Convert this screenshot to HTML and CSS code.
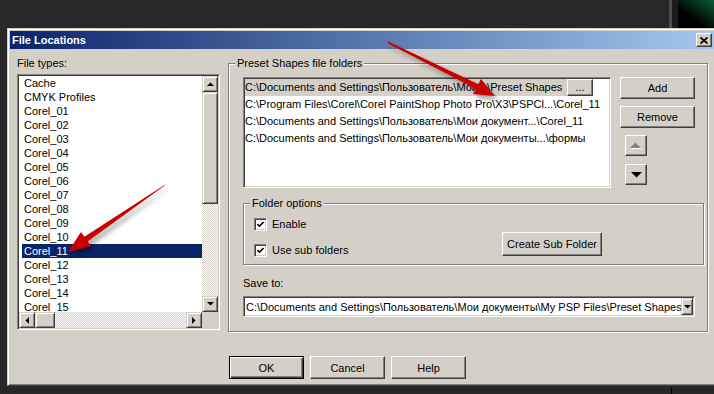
FILE: index.html
```html
<!DOCTYPE html>
<html lang="ru">
<head>
    <meta charset="UTF-8">
    <title>File Locations</title>
    <link rel="stylesheet" href="styles.css">
</head>
<body>
    <div class="dialog">
        <div class="titlebar">
            <span class="title">File Locations</span>
            <button class="close-btn">
                <svg width="8" height="7" viewBox="0 0 8 7"><path d="M0.5 0.5L7.5 6.5M7.5 0.5L0.5 6.5" stroke="#000" stroke-width="1.8"/></svg>
            </button>
        </div>

        <div class="main">
            <div class="types">
                <div class="label">File types:</div>
                <div class="listbox">
                    <div class="list-area">
                        <ul class="items">
                            <li>Cache</li>
                            <li>CMYK Profiles</li>
                            <li>Corel_01</li>
                            <li>Corel_02</li>
                            <li>Corel_03</li>
                            <li>Corel_04</li>
                            <li>Corel_05</li>
                            <li>Corel_06</li>
                            <li>Corel_07</li>
                            <li>Corel_08</li>
                            <li>Corel_09</li>
                            <li>Corel_10</li>
                            <li class="selected">Corel_11</li>
                            <li>Corel_12</li>
                            <li>Corel_13</li>
                            <li>Corel_14</li>
                            <li>Corel_15</li>
                        </ul>
                        <div class="vscroll">
                            <div class="sb-btn"><svg width="7" height="4"><polygon points="0,4 7,4 3.5,0.5" fill="#000"/></svg></div>
                            <div class="sb-thumb vthumb"></div>
                            <div class="sb-track"></div>
                            <div class="sb-btn"><svg width="7" height="4"><polygon points="0,0 7,0 3.5,3.5" fill="#000"/></svg></div>
                        </div>
                    </div>
                    <div class="hscroll-row">
                        <div class="hscroll">
                            <div class="sb-btn"><svg width="4" height="7"><polygon points="4,0 4,7 0.5,3.5" fill="#000"/></svg></div>
                            <div class="sb-thumb hthumb"></div>
                            <div class="sb-track"></div>
                            <div class="sb-btn"><svg width="4" height="7"><polygon points="0,0 0,7 3.5,3.5" fill="#000"/></svg></div>
                        </div>
                        <div class="sb-corner"></div>
                    </div>
                </div>
            </div>

            <div class="group folders-group">
                <div class="legend">Preset Shapes file folders</div>
                <div class="folders-row">
                    <div class="folder-list">
                        <div class="folder editing">
                            <span class="path">C:\Documents and Settings\Пользователь\Мои...\Preset Shapes</span>
                            <button class="btn browse-btn">...</button>
                        </div>
                        <div class="folder">C:\Program Files\Corel\Corel PaintShop Photo Pro\X3\PSPCl...\Corel_11</div>
                        <div class="folder">C:\Documents and Settings\Пользователь\Мои документ...\Corel_11</div>
                        <div class="folder">C:\Documents and Settings\Пользователь\Мои документы...\формы</div>
                    </div>
                    <div class="side-buttons">
                        <button class="btn">Add</button>
                        <button class="btn">Remove</button>
                        <button class="btn arrow-btn" disabled>
                            <svg width="12" height="7"><polygon points="1,7 12,7 6.5,1.5" fill="#fff"/><polygon points="0,6 11,6 5.5,0.5" fill="#808080"/></svg>
                        </button>
                        <button class="btn arrow-btn">
                            <svg width="11" height="6"><polygon points="0,0 11,0 5.5,5.5" fill="#000"/></svg>
                        </button>
                    </div>
                </div>

                <div class="group options-group">
                    <div class="legend">Folder options</div>
                    <div class="options-row">
                        <div class="checks">
                            <label class="check"><span class="box"><svg width="7" height="7"><polyline points="0.5,3 2.5,5.2 6.5,1" fill="none" stroke="#000" stroke-width="1.6"/></svg></span>Enable</label>
                            <label class="check"><span class="box"><svg width="7" height="7"><polyline points="0.5,3 2.5,5.2 6.5,1" fill="none" stroke="#000" stroke-width="1.6"/></svg></span>Use sub folders</label>
                        </div>
                        <button class="btn create-btn">Create Sub Folder</button>
                    </div>
                </div>

                <div class="label save-label">Save to:</div>
                <div class="combo">
                    <span class="combo-text">C:\Documents and Settings\Пользователь\Мои документы\My PSP Files\Preset Shapes</span>
                    <span class="combo-btn"><svg width="7" height="4"><polygon points="0,0 7,0 3.5,3.5" fill="#000"/></svg></span>
                </div>
            </div>
        </div>

        <div class="footer">
            <button class="btn default">OK</button>
            <button class="btn">Cancel</button>
            <button class="btn">Help</button>
        </div>
    </div>

    <!-- red pointer arrows drawn over the screenshot -->
    <svg class="annotations" width="714" height="394">
        <defs>
            <filter id="shadow" x="-20%" y="-20%" width="140%" height="140%">
                <feDropShadow dx="3" dy="4" stdDeviation="2.5" flood-color="#000" flood-opacity="0.35"/>
            </filter>
        </defs>
        <g filter="url(#shadow)" fill="#c80000">
            <polygon points="387,41 389,44 478,90 480,85"/>
            <polygon points="495,96 473,94 481,79"/>
            <polygon points="166,184 164,186 87,242 84,237"/>
            <polygon points="68,252 81,232 91,246"/>
        </g>
    </svg>
</body>
</html>
```

FILE: styles.css
```css
body {
    margin: 0;
    width: 714px;
    height: 394px;
    overflow: hidden;
    position: relative;
    font-family: 'Liberation Sans', Arial, sans-serif;
    font-size: 11px;
    color: #000;
    background:
        linear-gradient(35deg, #000 35%, #0d5b30 100%) 678px 0 / 36px 28px no-repeat,
        linear-gradient(#4e4e4e, #4e4e4e) 669px 0 / 3px 28px no-repeat,
        linear-gradient(#1c1c1c, #1c1c1c) 672px 0 / 6px 28px no-repeat,
        linear-gradient(#000, #000) 671px 387px / 1px 8px no-repeat,
        #282828;
}
.dialog {
    margin: 28px 0 0 7px;
    width: 720px;
    height: 358px;
    box-sizing: border-box;
    padding: 2px;
    background-color: #d4d0c8;
    border: 1px solid;
    border-color: #d4d0c8 #404040 #404040 #d4d0c8;
    box-shadow: inset 1px 1px #fff, inset -1px -1px #808080;
}
.titlebar {
    height: 18px;
    display: flex;
    align-items: center;
    padding-left: 2px;
    background: linear-gradient(to right, #0a246a, #a6caf0);
}
.title {
    color: #fff;
    font-weight: bold;
    font-size: 11px;
}
.close-btn {
    margin-left: auto;
    margin-right: 12px;
    width: 16px;
    height: 14px;
    padding: 0;
    display: flex;
    align-items: center;
    justify-content: center;
    background-color: #d4d0c8;
    border: 1px solid;
    border-color: #fff #404040 #404040 #fff;
    box-shadow: inset -1px -1px #808080;
}
.main {
    display: flex;
    gap: 8px;
    padding: 8px 0 0 7px;
}
.label {
    height: 13px;
    line-height: 13px;
}
.types {
    width: 203px;
}
.listbox, .folder-list, .combo {
    box-sizing: border-box;
    padding: 1px;
    background-color: #fff;
    border: 1px solid;
    border-color: #808080 #fff #fff #808080;
    box-shadow: inset 1px 1px #404040, inset -1px -1px #d4d0c8;
}
.listbox {
    margin-top: 4px;
    height: 256px;
    display: flex;
    flex-direction: column;
}
.list-area {
    display: flex;
    height: 236px;
}
.items {
    flex: 1;
    margin: 0;
    padding: 0;
    list-style: none;
    overflow: hidden;
}
.items li {
    height: 14px;
    line-height: 14px;
    margin-left: 3px;
    padding-left: 2px;
}
.items li.selected {
    background-color: #0a246a;
    color: #fff;
}
.vscroll, .hscroll {
    display: flex;
    background: repeating-conic-gradient(#fff 0 25%, #d4d0c8 0 50%) 0 0 / 2px 2px;
}
.vscroll {
    width: 16px;
    flex-direction: column;
}
.hscroll-row {
    display: flex;
    height: 16px;
}
.hscroll {
    flex: 1;
}
.sb-btn, .sb-thumb {
    flex: none;
    box-sizing: border-box;
    background-color: #d4d0c8;
    border: 1px solid;
    border-color: #d4d0c8 #404040 #404040 #d4d0c8;
    box-shadow: inset 1px 1px #fff, inset -1px -1px #808080;
}
.sb-btn {
    width: 16px;
    height: 16px;
    display: flex;
    align-items: center;
    justify-content: center;
}
.vthumb {
    height: 112px;
}
.hthumb {
    width: 20px;
}
.sb-track {
    flex: 1;
}
.sb-corner {
    width: 16px;
    background-color: #d4d0c8;
}
.group {
    box-sizing: border-box;
    border: 1px solid #808080;
    box-shadow: inset 1px 1px #fff, 1px 1px #fff;
}
.legend {
    display: table;
    height: 13px;
    line-height: 13px;
    padding: 0 2px;
    background-color: #d4d0c8;
}
.folders-group {
    width: 480px;
    height: 269px;
    margin-top: 6px;
    padding-left: 14px;
}
.folders-group > .legend {
    margin: -7px 0 0 -8px;
}
.folders-row {
    display: flex;
    gap: 9px;
    margin-top: 7px;
}
.folder-list {
    width: 368px;
    height: 111px;
}
.folder {
    height: 17px;
    line-height: 17px;
    white-space: nowrap;
    overflow: hidden;
}
.folder.editing {
    display: flex;
}
.folder .path {
    width: 322px;
    overflow: hidden;
    background-color: #d4d0c8;
}
.btn {
    font: inherit;
    color: #000;
    padding: 0;
    background-color: #d4d0c8;
    border: 1px solid;
    border-color: #fff #404040 #404040 #fff;
    box-shadow: inset -1px -1px #808080;
}
.browse-btn {
    width: 26px;
    height: 17px;
    line-height: 13px;
}
.side-buttons {
    width: 75px;
    display: flex;
    flex-direction: column;
}
.side-buttons .btn {
    height: 22px;
}
.side-buttons .btn + .btn {
    margin-top: 7px;
}
.side-buttons .arrow-btn {
    width: 22px;
    height: 21px;
    margin-left: 5px;
    display: flex;
    align-items: center;
    justify-content: center;
}
.side-buttons .arrow-btn + .arrow-btn {
    margin-top: 8px;
}
.options-group {
    width: 461px;
    height: 62px;
    margin-top: 15px;
    padding-left: 10px;
}
.options-group > .legend {
    margin: -7px 0 0 -4px;
}
.options-row {
    display: flex;
    align-items: flex-start;
}
.checks {
    margin-top: 1px;
}
.check {
    display: flex;
    align-items: center;
    height: 26px;
}
.box {
    width: 13px;
    height: 13px;
    margin-right: 5px;
    box-sizing: border-box;
    display: flex;
    align-items: center;
    justify-content: center;
    background-color: #fff;
    border: 1px solid;
    border-color: #808080 #fff #fff #808080;
    box-shadow: inset 1px 1px #404040, inset -1px -1px #d4d0c8;
}
.create-btn {
    width: 100px;
    height: 24px;
    margin: 22px 101px 0 auto;
}
.save-label {
    margin-top: 12px;
}
.combo {
    margin-top: 6px;
    width: 452px;
    height: 21px;
    display: flex;
    align-items: center;
}
.combo-text {
    flex: 1;
    padding-left: 1px;
    white-space: nowrap;
    overflow: hidden;
}
.combo-btn {
    width: 12px;
    height: 17px;
    box-sizing: border-box;
    display: flex;
    align-items: center;
    justify-content: center;
    background-color: #d4d0c8;
    border: 1px solid;
    border-color: #d4d0c8 #404040 #404040 #d4d0c8;
    box-shadow: inset 1px 1px #fff, inset -1px -1px #808080;
}
.footer {
    display: flex;
    gap: 6px;
    margin-top: 24px;
    padding-left: 219px;
}
.footer .btn {
    width: 75px;
    height: 23px;
}
.footer .default {
    border: 1px solid #000;
    box-shadow: inset 1px 1px #fff, inset -1px -1px #404040, inset -2px -2px #808080;
}
.annotations {
    position: absolute;
    top: 0;
    left: 0;
    pointer-events: none;
}
```
